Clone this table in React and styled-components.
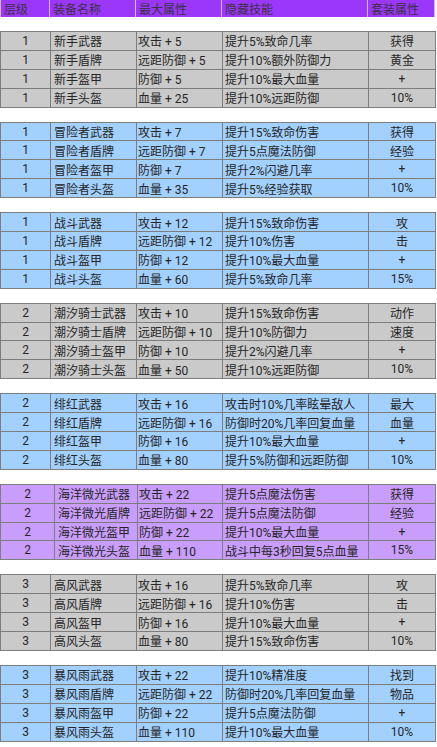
import React from 'react';
import styled, { createGlobalStyle } from 'styled-components';

const GlobalStyle = createGlobalStyle`
  html, body {
    margin: 0;
    padding: 0;
    background: #ffffff;
  }
  body {
    font-family: Roboto, "Noto Sans CJK SC", sans-serif;
  }
`;

const COLS = [50, 86, 86, 146, 67];
const WIDE_FIRST = [54, 83, 85, 146, 67];

const TONES = {
  gray: '#cacaca',
  blue: '#a2d1ff',
  purple: '#c99dfb',
};

const groups = [
  {
    tone: 'gray',
    rows: [
      ['1', '新手武器', '攻击 + 5', '提升5%致命几率', '获得'],
      ['1', '新手盾牌', '远距防御 + 5', '提升10%额外防御力', '黄金'],
      ['1', '新手盔甲', '防御 + 5', '提升10%最大血量', '+'],
      ['1', '新手头盔', '血量 + 25', '提升10%远距防御', '10%'],
    ],
  },
  {
    tone: 'blue',
    rows: [
      ['1', '冒险者武器', '攻击 + 7', '提升15%致命伤害', '获得'],
      ['1', '冒险者盾牌', '远距防御 + 7', '提升5点魔法防御', '经验'],
      ['1', '冒险者盔甲', '防御 + 7', '提升2%闪避几率', '+'],
      ['1', '冒险者头盔', '血量 + 35', '提升5%经验获取', '10%'],
    ],
  },
  {
    tone: 'blue',
    rows: [
      ['1', '战斗武器', '攻击 + 12', '提升15%致命伤害', '攻'],
      ['1', '战斗盾牌', '远距防御 + 12', '提升10%伤害', '击'],
      ['1', '战斗盔甲', '防御 + 12', '提升10%最大血量', '+'],
      ['1', '战斗头盔', '血量 + 60', '提升5%致命几率', '15%'],
    ],
  },
  {
    tone: 'gray',
    rows: [
      ['2', '潮汐骑士武器', '攻击 + 10', '提升15%致命伤害', '动作'],
      ['2', '潮汐骑士盾牌', '远距防御 + 10', '提升10%防御力', '速度'],
      ['2', '潮汐骑士盔甲', '防御 + 10', '提升2%闪避几率', '+'],
      ['2', '潮汐骑士头盔', '血量 + 50', '提升10%远距防御', '10%'],
    ],
  },
  {
    tone: 'blue',
    rows: [
      ['2', '绯红武器', '攻击 + 16', '攻击时10%几率眩晕敌人', '最大'],
      ['2', '绯红盾牌', '远距防御 + 16', '防御时20%几率回复血量', '血量'],
      ['2', '绯红盔甲', '防御 + 16', '提升10%最大血量', '+'],
      ['2', '绯红头盔', '血量 + 80', '提升5%防御和远距防御', '10%'],
    ],
  },
  {
    tone: 'purple',
    cols: WIDE_FIRST,
    rows: [
      ['2', '海洋微光武器', '攻击 + 22', '提升5点魔法伤害', '获得'],
      ['2', '海洋微光盾牌', '远距防御 + 22', '提升5点魔法防御', '经验'],
      ['2', '海洋微光盔甲', '防御 + 22', '提升10%最大血量', '+'],
      ['2', '海洋微光头盔', '血量 + 110', '战斗中每3秒回复5点血量', '15%'],
    ],
  },
  {
    tone: 'gray',
    rows: [
      ['3', '高风武器', '攻击 + 16', '提升5%致命几率', '攻'],
      ['3', '高风盾牌', '远距防御 + 16', '提升10%伤害', '击'],
      ['3', '高风盔甲', '防御 + 16', '提升10%最大血量', '+'],
      ['3', '高风头盔', '血量 + 80', '提升15%致命伤害', '10%'],
    ],
  },
  {
    tone: 'blue',
    rows: [
      ['3', '暴风雨武器', '攻击 + 22', '提升10%精准度', '找到'],
      ['3', '暴风雨盾牌', '远距防御 + 22', '防御时20%几率回复血量', '物品'],
      ['3', '暴风雨盔甲', '防御 + 22', '提升5点魔法防御', '+'],
      ['3', '暴风雨头盔', '血量 + 110', '提升10%最大血量', '10%'],
    ],
  },
];

const headings = ['层级', '装备名称', '最大属性', '隐藏技能', '套装属性'];

// alignment + left padding per column
const CELL_LAYOUT = [
  { align: 'center', pad: 0 },
  { align: 'left', pad: 3 },
  { align: 'left', pad: 1 },
  { align: 'left', pad: 2 },
  { align: 'center', pad: 0 },
];

const Sheet = styled.div`
  width: 437px;
  display: flex;
  flex-direction: column;
  gap: 14px;
  padding-bottom: 6px;
`;

const Grid = styled.div`
  display: grid;
  grid-template-columns: ${(p) => p.$cols.map((c) => `${c}px`).join(' ')};
  grid-auto-rows: ${(p) => p.$rowHeight}px;
  width: max-content;
`;

const HeaderGrid = styled(Grid)`
  background: #9b37fa;
`;

const HeadCell = styled.div`
  box-sizing: border-box;
  display: flex;
  align-items: center;
  padding-left: 3px;
  border-right: 1px solid #d2b9ef;
  font-size: 12px;
  color: #3a3340;
  white-space: nowrap;
  &:first-child {
    border-left: 1px solid #d2b9ef;
  }
`;

const GroupGrid = styled(Grid)`
  background: ${(p) => TONES[p.$tone]};
  border-top: 1px solid #7d7d7d;
  border-left: 1px solid #7d7d7d;
`;

const Cell = styled.div`
  box-sizing: border-box;
  display: flex;
  align-items: center;
  justify-content: ${(p) => (p.$align === 'center' ? 'center' : 'flex-start')};
  padding-left: ${(p) => p.$pad}px;
  border-right: 1px solid #7d7d7d;
  border-bottom: 1px solid #7d7d7d;
  font-size: 12px;
  color: #262626;
  white-space: nowrap;
  overflow: hidden;
`;

function Group({ tone, cols = COLS, rows }) {
  return (
    <GroupGrid $cols={cols} $rowHeight={18.9} $tone={tone}>
      {rows.map((row, r) =>
        row.map((text, c) => (
          <Cell key={`${r}-${c}`} $align={CELL_LAYOUT[c].align} $pad={CELL_LAYOUT[c].pad}>
            {text}
          </Cell>
        ))
      )}
    </GroupGrid>
  );
}

export default function App() {
  return (
    <>
      <GlobalStyle />
      <Sheet>
        <HeaderGrid $cols={COLS} $rowHeight={17}>
          {headings.map((h) => (
            <HeadCell key={h}>{h}</HeadCell>
          ))}
        </HeaderGrid>
        {groups.map((g, i) => (
          <Group key={i} {...g} />
        ))}
      </Sheet>
    </>
  );
}
